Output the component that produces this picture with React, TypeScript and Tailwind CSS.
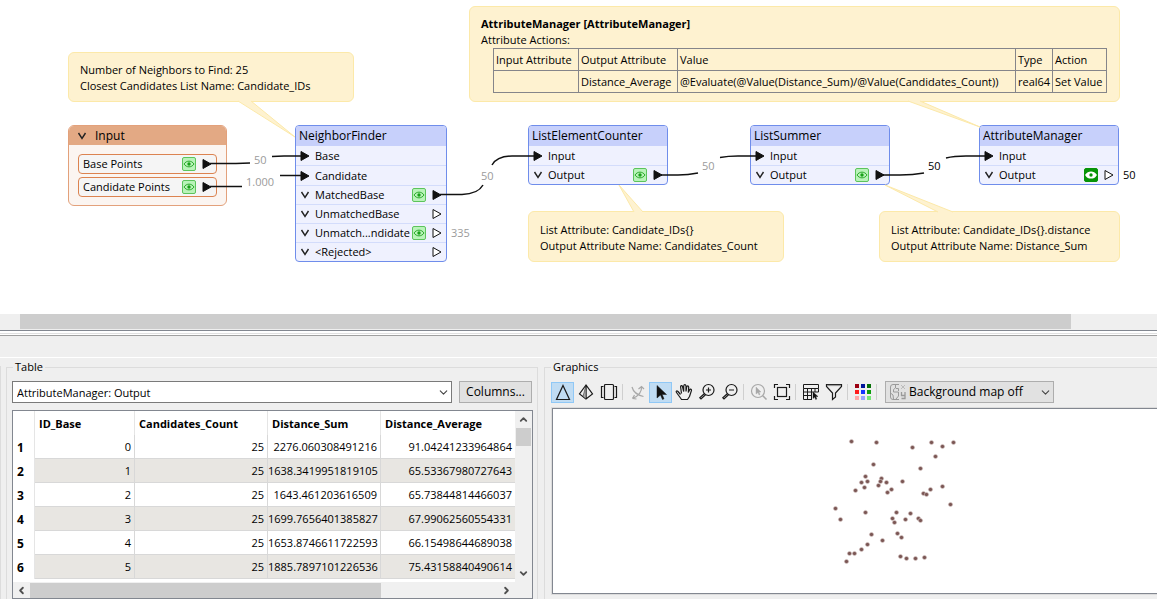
import type { ReactNode } from "react"
import { ChevronDown, ChevronLeft, ChevronRight, ChevronUp } from "lucide-react"

const noteHeaders = ["Input Attribute", "Output Attribute", "Value", "Type", "Action"]
const noteValues = [
    "",
    "Distance_Average",
    "@Evaluate(@Value(Distance_Sum)/@Value(Candidates_Count))",
    "real64",
    "Set Value",
]

const rows = [
    ["0", "25", "2276.060308491216", "91.04241233964864"],
    ["1", "25", "1638.3419951819105", "65.53367980727643"],
    ["2", "25", "1643.461203616509", "65.73844814466037"],
    ["3", "25", "1699.7656401385827", "67.99062560554331"],
    ["4", "25", "1653.8746611722593", "66.15498644689038"],
    ["5", "25", "1885.7897101226536", "75.43158840490614"],
]

const points = [
    [31, 16], [56, 17], [92, 22], [111, 17], [122, 21], [133, 17], [115, 31], [53, 39],
    [100, 43], [45, 51], [41, 57], [47, 56], [44, 62], [35, 65], [61, 53], [60, 56],
    [58, 60], [66, 57], [71, 64], [67, 67], [82, 56], [103, 68], [106, 69], [110, 64],
    [122, 61], [130, 79], [15, 83], [20, 94], [45, 87], [76, 87], [72, 93], [74, 97],
    [85, 94], [90, 88], [98, 93], [100, 95], [51, 109], [62, 115], [77, 108], [81, 112],
    [47, 119], [41, 124], [29, 128], [34, 128], [26, 136], [80, 131], [86, 133], [95, 133],
    [104, 132],
]

const Eye = ({ active = false }: { active?: boolean }) => (
    <button
        type="button"
        aria-label="View features"
        className={`flex h-[14px] w-[14px] shrink-0 items-center justify-center rounded-xs border ${
            active ? "border-[#079407] bg-[#079407] text-white" : "border-[#5cc45c] bg-[#b9f3b9] text-[#18a018]"
        }`}
    >
        <svg width="12" height="10" viewBox="0 0 12 10" fill="none" stroke="currentColor" strokeWidth={active ? 1.5 : 0.9} className="shrink-0">
            <path d="M1 5C3.5 1.2 8.5 1.2 11 5C8.5 8.8 3.5 8.8 1 5Z" fill={active ? "currentColor" : "none"} />
            <circle cx="6" cy="5" r="1.7" fill={active ? "#079407" : "currentColor"} stroke="none" />
        </svg>
    </button>
)

const Arrow = ({ filled = false }: { filled?: boolean }) => (
    <svg width="10" height="12" viewBox="0 0 10 12" className="shrink-0">
        <path d="M1 1.5L9 6L1 10.5Z" fill={filled ? "#111" : "#fff"} stroke="#111" strokeWidth="1" />
    </svg>
)

const Fold = () => (
    <svg width="10" height="10" viewBox="0 0 10 10" fill="none" stroke="#222" strokeWidth="1.4" className="shrink-0">
        <path d="M1.500 2L5 7.500L8.500 2" />
    </svg>
)

interface PortProps {
    name: string;
    input?: boolean;
    filled?: boolean;
    eye?: "idle" | "active";
}

function Port({ name, input, filled, eye }: PortProps) {
    return (
        <li
            className={`flex items-center border-b border-[#d3dcfb] px-1 last:h-[18px] last:border-b-0 ${
                input ? "h-5" : "h-[19px]"
            }`}
        >
            <span className="flex w-[15px] shrink-0">
                {input ? <Arrow filled /> : <Fold />}
            </span>
            <span className="min-w-0 flex-1 whitespace-nowrap leading-4">{name}</span>
            {eye && <Eye active={eye === "active"} />}
            {!input && <span className="ml-[6px] flex"><Arrow filled={filled} /></span>}
        </li>
    )
}

function Transformer({ title, place, children }: { title: string; place: string; children: ReactNode }) {
    return (
        <section className={`absolute top-[125px] overflow-hidden rounded-[4px] border border-[#6f8deb] bg-[#eff1fe] ${place}`}>
            <h2 className="h-5 bg-[#c7d0fb] pl-[3px] text-[12px] leading-5">{title}</h2>
            <ul>{children}</ul>
        </section>
    )
}

const Note = ({ place, children }: { place: string; children: ReactNode }) => (
    <div className={`absolute rounded-md border border-[#fce9a9] bg-[#fef2d0] px-[11px] leading-4 whitespace-nowrap ${place}`}>
        {children}
    </div>
)

const Count = ({ place, children }: { place: string; children: ReactNode }) => (
    <span className={`absolute leading-4 ${place}`}>{children}</span>
)

function Canvas() {
    return (
        <main className="relative h-[314px] shrink-0 overflow-hidden bg-white">
            <Note place="left-[68px] top-[52px] h-[50px] w-[286px] pt-[9px]">
                <p>Number of Neighbors to Find: 25</p>
                <p>Closest Candidates List Name: Candidate_IDs</p>
            </Note>
            <Note place="left-[469px] top-[6px] h-24 w-[651px] pt-[9px]">
                <p className="font-bold">AttributeManager [AttributeManager]</p>
                <p>Attribute Actions:</p>
                <table className="ml-3 w-[614px] table-fixed border-collapse text-left">
                    <colgroup>
                        <col className="w-[85px]" />
                        <col className="w-[99px]" />
                        <col />
                        <col className="w-[37px]" />
                        <col className="w-[54px]" />
                    </colgroup>
                    <thead>
                        <tr className="h-[22px]">
                            {noteHeaders.map((h) => (
                                <th key={h} className="border border-[#85858a] px-0.5 font-normal">{h}</th>
                            ))}
                        </tr>
                    </thead>
                    <tbody>
                        <tr className="h-[22px]">
                            {noteValues.map((v, i) => (
                                <td key={i} className="border border-[#85858a] px-0.5">{v}</td>
                            ))}
                        </tr>
                    </tbody>
                </table>
            </Note>
            <Note place="left-[528px] top-[211px] h-[51px] w-[256px] pt-[10px]">
                <p>List Attribute: Candidate_IDs{"{}"}</p>
                <p>Output Attribute Name: Candidates_Count</p>
            </Note>
            <Note place="left-[879px] top-[211px] h-[51px] w-[241px] pt-[10px]">
                <p>List Attribute: Candidate_IDs{"{}"}.distance</p>
                <p>Output Attribute Name: Distance_Sum</p>
            </Note>

            {/* Reader */}
            <section className="absolute left-[68px] top-[125px] h-[81px] w-[159px] overflow-hidden rounded-md border border-[#e3a17b] bg-[#fbf5f1]">
                <h2 className="flex h-[19px] items-center gap-2 bg-[#e3a984] pl-2 text-[12px] leading-[19px]">
                    <Fold />
                    Input
                </h2>
                <ul className="flex flex-col gap-[3px] px-[9px] pt-[9px]">
                    {["Base Points", "Candidate Points"].map((name) => (
                        <li key={name} className="flex h-5 items-center rounded-[4px] border border-[#dc8350] bg-[#f5f5f5] px-1">
                            <span className="flex-1 leading-4">{name}</span>
                            <Eye />
                            <span className="ml-[6px] flex"><Arrow filled /></span>
                        </li>
                    ))}
                </ul>
            </section>

            <Transformer title="NeighborFinder" place="left-[295px] w-[152px]">
                <Port name="Base" input />
                <Port name="Candidate" input />
                <Port name="MatchedBase" eye="idle" filled />
                <Port name="UnmatchedBase" />
                <Port name="Unmatch...ndidate" eye="idle" />
                <Port name="<Rejected>" />
            </Transformer>
            <Transformer title="ListElementCounter" place="left-[528px] w-[140px]">
                <Port name="Input" input />
                <Port name="Output" eye="idle" filled />
            </Transformer>
            <Transformer title="ListSummer" place="left-[750px] w-[140px]">
                <Port name="Input" input />
                <Port name="Output" eye="idle" filled />
            </Transformer>
            <Transformer title="AttributeManager" place="left-[979px] w-[140px]">
                <Port name="Input" input />
                <Port name="Output" eye="active" />
            </Transformer>

            {/* Connections and note pointers */}
            <svg width="1157" height="314" className="pointer-events-none absolute left-0 top-0" fill="none">
                <g fill="#fef2d0" stroke="#fce9a9">
                    <path d="M238 101L295 137L251 101" />
                    <path d="M908 101L980 127L920 101" />
                    <path d="M634 212L619 185L643 212" />
                    <path d="M938 212L885 185L953 212" />
                </g>
                <g stroke="#111" strokeWidth="1.5">
                    <path d="M210 163.5H236L250 163" />
                    <path d="M272 156.5L284 156H302" />
                    <path d="M210 186.5H242" />
                    <path d="M280 175.5H302" />
                    <path d="M440 194.5H462Q478 194 483 185" />
                    <path d="M492 165Q497 156 512 156H535" />
                    <path d="M661 175H678Q688 175 698 173" />
                    <path d="M720 157.500Q728 156 738 156H757" />
                    <path d="M882 175H900Q913 175 924 173" />
                    <path d="M946 158Q954 156 966 156H986" />
                </g>
            </svg>
            <Count place="left-[254px] top-[152px] text-[#9b9b9b]">50</Count>
            <Count place="left-[246px] top-[174px] text-[#9b9b9b]">1.000</Count>
            <Count place="left-[481px] top-[168px] text-[#9b9b9b]">50</Count>
            <Count place="left-[451px] top-[225px] text-[#9b9b9b]">335</Count>
            <Count place="left-[702px] top-[158px] text-[#9b9b9b]">50</Count>
            <Count place="left-[928px] top-[158px]">50</Count>
            <Count place="left-[1123px] top-[167px]">50</Count>
        </main>
    )
}

function TablePanel() {
    return (
        <fieldset className="ml-[5px] flex w-[532px] shrink-0 flex-col border border-b-0 border-[#dcdcdc] pl-[5px] pr-1 pt-[5px]">
            <legend className="ml-px px-0.5 leading-[18px]">Table</legend>
            <div className="flex gap-[7px] pr-px">
                <div className="relative flex-1">
                    <select aria-label="Feature type" className="block h-[22px] w-full appearance-none border border-[#7a7a7a] bg-white pl-1 pt-0.5">
                        <option>AttributeManager: Output</option>
                    </select>
                    <ChevronDown size={13} strokeWidth={2} className="pointer-events-none absolute right-[2px] top-[5px] text-[#444]" />
                </div>
                <button type="button" className="h-[22px] w-[73px] border border-[#adadad] bg-[#e1e1e1] text-[12px] leading-5">
                    Columns...
                </button>
            </div>
            <div className="mt-[7px] flex min-h-0 flex-1 flex-col border border-[#828790] bg-white">
                <div className="flex min-h-0 flex-1">
                    <div className="min-w-0 flex-1 overflow-hidden">
                        <table className="w-full table-fixed border-separate border-spacing-0 leading-4">
                            <colgroup>
                                <col className="w-[22px]" />
                                <col className="w-[100px]" />
                                <col className="w-[133px]" />
                                <col className="w-[113px]" />
                                <col />
                            </colgroup>
                            <thead>
                                <tr className="h-6 text-left">
                                    <th className="border-r border-[#e5e5e5]" />
                                    {["ID_Base", "Candidates_Count", "Distance_Sum", "Distance_Average"].map((h) => (
                                        <th key={h} className="border-r border-[#e5e5e5] pl-1 pt-0.5 font-bold last:border-r-0">{h}</th>
                                    ))}
                                </tr>
                            </thead>
                            <tbody>
                                {rows.map((row, i) => (
                                    <tr key={i} className="group h-6">
                                        <th className="border-r border-[#e5e5e5] pl-1 pt-0.5 text-left text-[12px] font-bold">{i + 1}</th>
                                        {row.map((cell, c) => (
                                            <td
                                                key={c}
                                                className="border-b border-r border-[#d8d8d8] pr-[3px] text-right last:border-r-0 group-even:bg-[#e8e6e2]"
                                            >
                                                {cell}
                                            </td>
                                        ))}
                                    </tr>
                                ))}
                            </tbody>
                        </table>
                    </div>
                    <div className="flex w-[17px] flex-col items-center bg-[#f0f0f0] text-[#505050]">
                        <ChevronUp size={11} strokeWidth={4} className="my-[3px] shrink-0" />
                        <div className="h-[18px] w-[15px] bg-[#cdcdcd]" />
                        <ChevronDown size={11} strokeWidth={4} className="mb-[3px] mt-auto shrink-0" />
                    </div>
                </div>
                <div className="flex h-4 shrink-0 items-center bg-[#f0f0f0] text-[#505050]">
                    <ChevronLeft size={11} strokeWidth={4} className="mx-[3px]" />
                    <div className="h-[15px] w-[351px] bg-[#cdcdcd]" />
                    <ChevronRight size={11} strokeWidth={4} className="ml-auto mr-5" />
                </div>
            </div>
        </fieldset>
    )
}

function Tool({ label, active, children }: { label: string; active?: boolean; children: ReactNode }) {
    return (
        <button
            type="button"
            aria-label={label}
            className={`flex h-[21px] w-[23px] items-center justify-center border ${
                active ? "border-[#90c8f6] bg-[#c0dcf3]" : "border-transparent"
            }`}
        >
            <svg width="18" height="18" viewBox="0 0 18 18" fill="none" stroke="#1a1a1a" strokeWidth="1.2" className="shrink-0">
                {children}
            </svg>
        </button>
    )
}

const Divider = () => <span className="ml-[2px] mr-[3px] h-4 w-px bg-[#cfcfcf]" />

const swatches = ["#9b0011", "#00149b", "#067006", "#ff1a1a", "#1433ff", "#0c9c0c", "#ffa6a6", "#98a5ff", "#74e774"]

function Toolbar() {
    return (
        <div className="flex h-[22px] items-center">
            <Tool label="2D" active>
                <path d="M9 2.500L15.500 16.500H2.500Z" />
            </Tool>
            <Tool label="3D">
                <path d="M9 2L2.500 11L9 16L15.500 11ZM9 2V16" />
                <path d="M9 2L9 16L6 13.500Z" fill="#aaa" strokeWidth="0.500" />
            </Tool>
            <Tool label="Slideshow">
                <rect x="4.500" y="1.500" width="9" height="15" rx="1" />
                <path d="M3.500 3.500H1.500V14.500H3.500M14.500 3.500H16.500V14.500H14.500" />
            </Tool>
            <Divider />
            <Tool label="Orbit">
                <g stroke="#a8a8a8">
                    <path d="M3 4C4 8 8 12 14.500 13.500M12.500 4C13 8 10 13 3.500 15.500M9.500 6L12.500 3.500L15 6M3.500 15.500L7.500 16M3.500 15.500L5.500 12" />
                </g>
            </Tool>
            <Tool label="Select" active>
                <path d="M5 2.500V15L8.500 12L10.500 16.500L12 15.800L10.200 11.500H14.500Z" fill="#111" strokeWidth="0.500" />
            </Tool>
            <Tool label="Pan">
                <path d="M5.500 11.500L3 8.500C1.500 7.200 .7 8.400 1.500 9.500L5.500 15L6.500 16.500H12.500L14.500 13.500L16.500 7.500C16.600 6 15.200 5.500 14.500 7L13.300 9.500L13.700 4C13.500 2.500 11.900 2.500 11.700 4L11 8.500V3C10.700 1.200 9 1.200 8.700 3V8.500L7.500 3.500C7 2 5.400 2.400 5.600 4L6.500 10.500" />
            </Tool>
            <Tool label="Zoom in">
                <circle cx="10.500" cy="7" r="5.500" />
                <path d="M8 7H13M10.500 4.500V9.500M6.500 10.500L1.800 14.800L3 16L7.500 11.800" />
            </Tool>
            <Tool label="Zoom out">
                <circle cx="10.500" cy="7" r="5.500" />
                <path d="M8 7H13M6.500 10.500L1.800 14.800L3 16L7.500 11.800" />
            </Tool>
            <Divider />
            <Tool label="Zoom to selected">
                <g stroke="#a8a8a8">
                    <circle cx="8" cy="8" r="6.500" />
                    <path d="M12.800 12.800L16.500 16.500" strokeWidth="1.600" />
                    <path d="M6 4V11L8 9.500L9 12L10 11.500L9 9H11Z" fill="#a8a8a8" strokeWidth="0.400" />
                </g>
            </Tool>
            <Tool label="Zoom to extents">
                <rect x="4.500" y="4.500" width="9" height="9" />
                <path d="M1.500 5V1.500H5M13 1.500H16.500V5M16.500 13V16.500H13M5 16.500H1.500V13" />
            </Tool>
            <Divider />
            <Tool label="Show table">
                <path d="M1.500 1.500H16.500V5.500H1.500ZM1.500 5.500V16.500H10M1.500 9H16.500M1.500 12.500H10M5.500 5.500V16.500M9.500 5.500V16.500M13 5.500V9M16.500 5.500V9" strokeWidth="1" />
                <path d="M11 9V15.500L12.700 14L13.700 16.500L14.800 16L13.800 13.500H16Z" fill="#111" strokeWidth="0.400" />
            </Tool>
            <Tool label="Filter">
                <path d="M1.500 1.500H16.500V3.500L10.500 10V14L7.500 16.500V10L1.500 3.500Z" />
                <path d="M2 2.500H16" stroke="#999" />
            </Tool>
            <Divider />
            <Tool label="Colours">
                <g stroke="none">
                    {swatches.map((c, i) => (
                        <rect key={c} x={1 + (i % 3) * 6} y={1 + Math.floor(i / 3) * 6} width="4" height="4" fill={c} />
                    ))}
                </g>
            </Tool>
            <Divider />
            <div className="relative ml-[5px]">
                <select aria-label="Background map" className="block h-[22px] w-[169px] appearance-none border border-[#adadad] bg-[#e1e1e1] pl-[23px] text-[12px]">
                    <option>Background map off</option>
                </select>
                <svg width="18" height="18" viewBox="0 0 18 18" fill="none" stroke="#9a9a9a" className="pointer-events-none absolute left-1 top-[2px]">
                    <path d="M10 1.500H4Q1.500 1.500 1.500 4V14Q1.500 16.500 4 16.500H10M6.500 1.500V5L4.500 6.500V9H9.500V13L7 16M1.500 10L4 12L4.500 16M9.500 8V5.500H7" />
                    <path d="M12 2L16 6M16 2L12 6" stroke="#bbb" />
                    <path d="M12.500 9V12.500H16M16 9V15.500H12.500" strokeWidth="1.300" />
                </svg>
                <ChevronDown size={13} strokeWidth={2} className="pointer-events-none absolute right-[2px] top-[5px] text-[#444]" />
            </div>
        </div>
    )
}

function GraphicsPanel() {
    return (
        <fieldset className="ml-[6px] flex min-w-0 flex-1 flex-col border border-b-0 border-r-0 border-[#dcdcdc] pb-1 pl-[6px] pt-[5px]">
            <legend className="px-0.5 leading-[18px]">Graphics</legend>
            <Toolbar />
            <div className="mt-1 min-h-0 flex-1 border border-r-0 border-[#dcdcdc]">
                <div className="h-full overflow-hidden border border-r-0 border-[#828790] bg-white pl-[267px] pt-4">
                    <svg width="150" height="150" viewBox="0 0 150 150">
                        {points.map(([x, y], i) => (
                            <circle key={i} cx={x + 0.5} cy={y + 0.5} r="2.1" fill="#7b5755" stroke="#d9c9c8" strokeWidth="0.6" />
                        ))}
                    </svg>
                </div>
            </div>
        </fieldset>
    )
}

export default function App() {
    return (
        <div className="flex h-screen flex-col overflow-hidden bg-[#efefef] font-['Open_Sans','Noto_Sans',sans-serif] text-[11px] text-black">
            <Canvas />
            <div className="h-4 shrink-0 bg-[#efefef] pl-5">
                <div className="h-[15px] w-[92.4%] bg-[#cdcdcd]" />
            </div>
            <div className="h-[6px] shrink-0 border-b border-t border-b-[#a0a0a0] border-t-[#828790] bg-white pt-[2px]">
                <div className="h-px bg-[#e0e0e0]" />
            </div>
            <div className="h-[22px] shrink-0 border-b border-white" />
            <div className="flex min-h-0 flex-1">
                <div className="mt-2 w-px bg-[#dcdcdc]" />
                <TablePanel />
                <GraphicsPanel />
            </div>
        </div>
    )
}
